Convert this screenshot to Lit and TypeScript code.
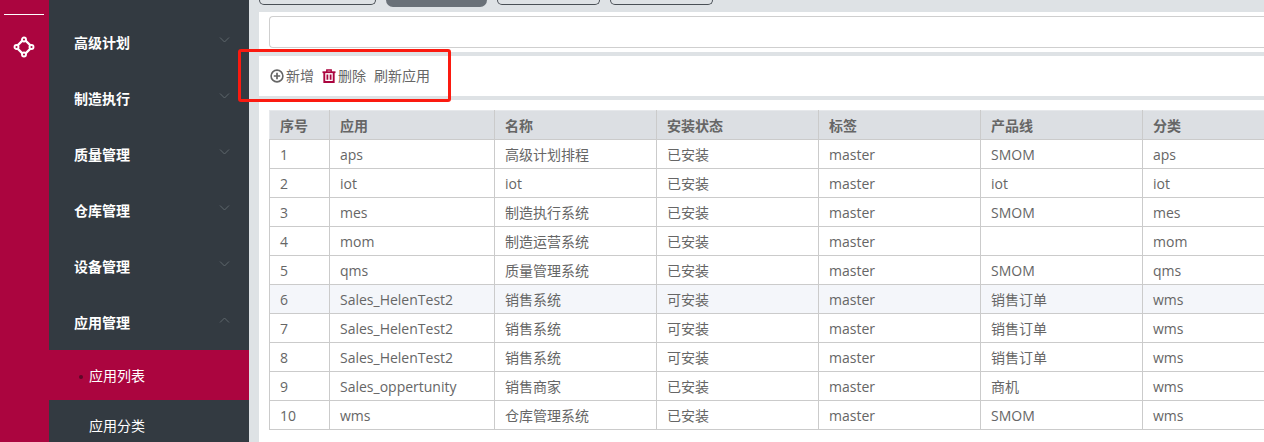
import { LitElement, html, css, svg } from "lit";
import { customElement } from "lit/decorators.js";

const menu = ["高级计划", "制造执行", "质量管理", "仓库管理", "设备管理", "应用管理"];
const cols = ["序号", "应用", "名称", "安装状态", "标签", "产品线", "分类"];
const rows: string[][] = [
  ["1", "aps", "高级计划排程", "已安装", "master", "SMOM", "aps"],
  ["2", "iot", "iot", "已安装", "master", "iot", "iot"],
  ["3", "mes", "制造执行系统", "已安装", "master", "SMOM", "mes"],
  ["4", "mom", "制造运营系统", "已安装", "master", "", "mom"],
  ["5", "qms", "质量管理系统", "已安装", "master", "SMOM", "qms"],
  ["6", "Sales_HelenTest2", "销售系统", "可安装", "master", "销售订单", "wms"],
  ["7", "Sales_HelenTest2", "销售系统", "可安装", "master", "销售订单", "wms"],
  ["8", "Sales_HelenTest2", "销售系统", "可安装", "master", "销售订单", "wms"],
  ["9", "Sales_oppertunity", "销售商家", "已安装", "master", "商机", "wms"],
  ["10", "wms", "仓库管理系统", "已安装", "master", "SMOM", "wms"],
];

const chevron = (up: boolean) => html`<svg class="chev" width="11" height="6" viewBox="0 0 11 6">
  <path d=${up ? "M1 5.5 L5.5 1 L10 5.5" : "M1 .5 L5.5 5 L10 .5"} fill="none" stroke="#5f666d" stroke-width="1"></path>
</svg>`;

@customElement("app-root")
export class AppRoot extends LitElement {
  static styles = css`
    :host {
      display: block;
      width: 1264px;
      height: 442px;
      overflow: hidden;
      position: relative;
      font-family: "Open Sans", "Noto Sans CJK SC", sans-serif;
      font-size: 14px;
      color: #666;
    }
    .app { display: flex; height: 442px; }
    .rail {
      width: 49px;
      flex: none;
      background: #ab053f;
      display: flex;
      flex-direction: column;
      align-items: center;
      padding: 14px 1px 0 0;
      box-sizing: border-box;
    }
    .rail-line { width: 40px; height: 1px; background: #fff; }
    .rail-icon { margin-top: 21px; display: block; }
    .side {
      width: 200px;
      flex: none;
      background: #333a41;
      padding-top: 14px;
      box-sizing: border-box;
      overflow: hidden;
    }
    .item {
      height: 56px;
      display: flex;
      align-items: center;
      padding-left: 25px;
      padding-right: 19px;
      color: #fff;
      font-weight: 700;
      font-size: 14px;
      justify-content: space-between;
    }
    .chev { margin-top: -5px; display: block; }
    .sub {
      height: 50px;
      display: flex;
      align-items: center;
      padding-left: 40px;
      color: #fff;
      font-size: 14px;
      position: relative;
    }
    .sub.active { background: #ab053f; }
    .dot {
      position: absolute;
      left: 30px;
      top: 25px;
      width: 4px;
      height: 4px;
      border-radius: 50%;
      background: #5e0828;
    }
    .main {
      flex: 1;
      min-width: 0;
      background: #dee2e5;
      padding-left: 10px;
      overflow: hidden;
    }
    .tabs {
      height: 12px;
      display: flex;
      gap: 10px;
      overflow: hidden;
      align-items: flex-start;
    }
    .tab {
      height: 5px;
      box-sizing: border-box;
      border: 1px solid #4a5056;
      border-top: none;
      border-radius: 0 0 9px 9px;
      flex: none;
    }
    .tab.on { height: 7px; background: #6a7178; border: none; }
    .filter {
      background: #fff;
      height: 40px;
      padding: 4px 0 0 10px;
      box-sizing: border-box;
    }
    .input {
      height: 32px;
      box-sizing: border-box;
      border: 1px solid #cfcfcf;
      border-right: none;
      border-radius: 4px 0 0 4px;
    }
    .toolbar {
      margin-top: 4px;
      background: #fff;
      height: 40px;
      display: flex;
      align-items: center;
      padding-left: 11px;
      box-sizing: border-box;
      line-height: 20px;
    }
    .btn { display: flex; align-items: center; gap: 2px; margin-right: 8px; }
    .btn svg { display: block; flex: none; }
    .content {
      margin-top: 4px;
      background: #fff;
      height: 342px;
      padding: 10px 0 0 10px;
      box-sizing: border-box;
    }
    table {
      border-collapse: collapse;
      table-layout: fixed;
      width: 1010px;
    }
    th, td {
      height: 29px;
      padding: 2px 0 0 10px;
      box-sizing: border-box;
      border: 1px solid #cbcbcb;
      text-align: left;
      white-space: nowrap;
      overflow: hidden;
      font-size: 14px;
      line-height: 20px;
    }
    th { background: #dcdfe3; font-weight: 700; color: #666; border-top-color: #e6e8eb; }
    th:first-child { border-left-color: #e6e8eb; }
    tr.hl td { background: #f4f6fa; }
    .mark {
      position: absolute;
      left: 238px;
      top: 49px;
      width: 213px;
      height: 53px;
      box-sizing: border-box;
      border: 3px solid #fb1a10;
      border-radius: 3px;
      pointer-events: none;
    }
  `;

  render() {
    const widths = [60, 165, 162, 162, 162, 162, 137];
    return html`
      <div class="app">
        <div class="rail">
          <div class="rail-line"></div>
          <svg class="rail-icon" width="22" height="22" viewBox="0 0 22 22" fill="none" stroke="#fff">
            <path d="M11 3 C14 6 16 8 19 11 C16 14 14 16 11 19 C8 16 6 14 3 11 C6 8 8 6 11 3 Z" stroke-width="2.4"></path>
            ${[[11, 3.5], [18.5, 11], [11, 18.5], [3.5, 11]].map(
              ([x, y]) => svg`<circle cx=${x} cy=${y} r="2" fill="#ab053f" stroke-width="1.9"></circle>`
            )}
          </svg>
        </div>
        <nav class="side">
          ${menu.map(
            (m, i) => html`<div class="item"><span>${m}</span>${chevron(i === menu.length - 1)}</div>`
          )}
          <div class="sub active"><span class="dot"></span>应用列表</div>
          <div class="sub">应用分类</div>
        </nav>
        <div class="main">
          <div class="tabs">
            <div class="tab" style="width:117px"></div>
            <div class="tab on" style="width:101px"></div>
            <div class="tab" style="width:103px"></div>
            <div class="tab" style="width:103px"></div>
          </div>
          <div class="filter"><div class="input"></div></div>
          <div class="toolbar">
            <span class="btn">
              <svg width="14" height="14" viewBox="0 0 14 14" fill="none" stroke="#666">
                <circle cx="7" cy="7" r="5.9" stroke-width="1.6"></circle>
                <path d="M3.8 7 H10.2 M7 3.8 V10.2" stroke-width="1.7"></path>
              </svg>
              新增
            </span>
            <span class="btn">
              <svg width="14" height="14" viewBox="0 0 14 14" fill="none" stroke="#ab053f">
                <path d="M.5 3.2 H13.5" stroke-width="1.8"></path>
                <path d="M4.8 3 V1 H9.2 V3" stroke-width="1.4"></path>
                <path d="M2.3 3.5 V13 H11.7 V3.5" stroke-width="1.9"></path>
                <path d="M5.4 5.5 V10.8 M8.6 5.5 V10.8" stroke-width="1.8"></path>
              </svg>
              删除
            </span>
            <span class="btn">刷新应用</span>
          </div>
          <div class="content">
            <table>
              <colgroup>${widths.map((w) => html`<col style="width:${w}px" />`)}</colgroup>
              <thead><tr>${cols.map((c) => html`<th>${c}</th>`)}</tr></thead>
              <tbody>
                ${rows.map(
                  (r, i) => html`<tr class=${i === 5 ? "hl" : ""}>${r.map((c) => html`<td>${c}</td>`)}</tr>`
                )}
              </tbody>
            </table>
          </div>
        </div>
      </div>
      <div class="mark"></div>
    `;
  }
}
